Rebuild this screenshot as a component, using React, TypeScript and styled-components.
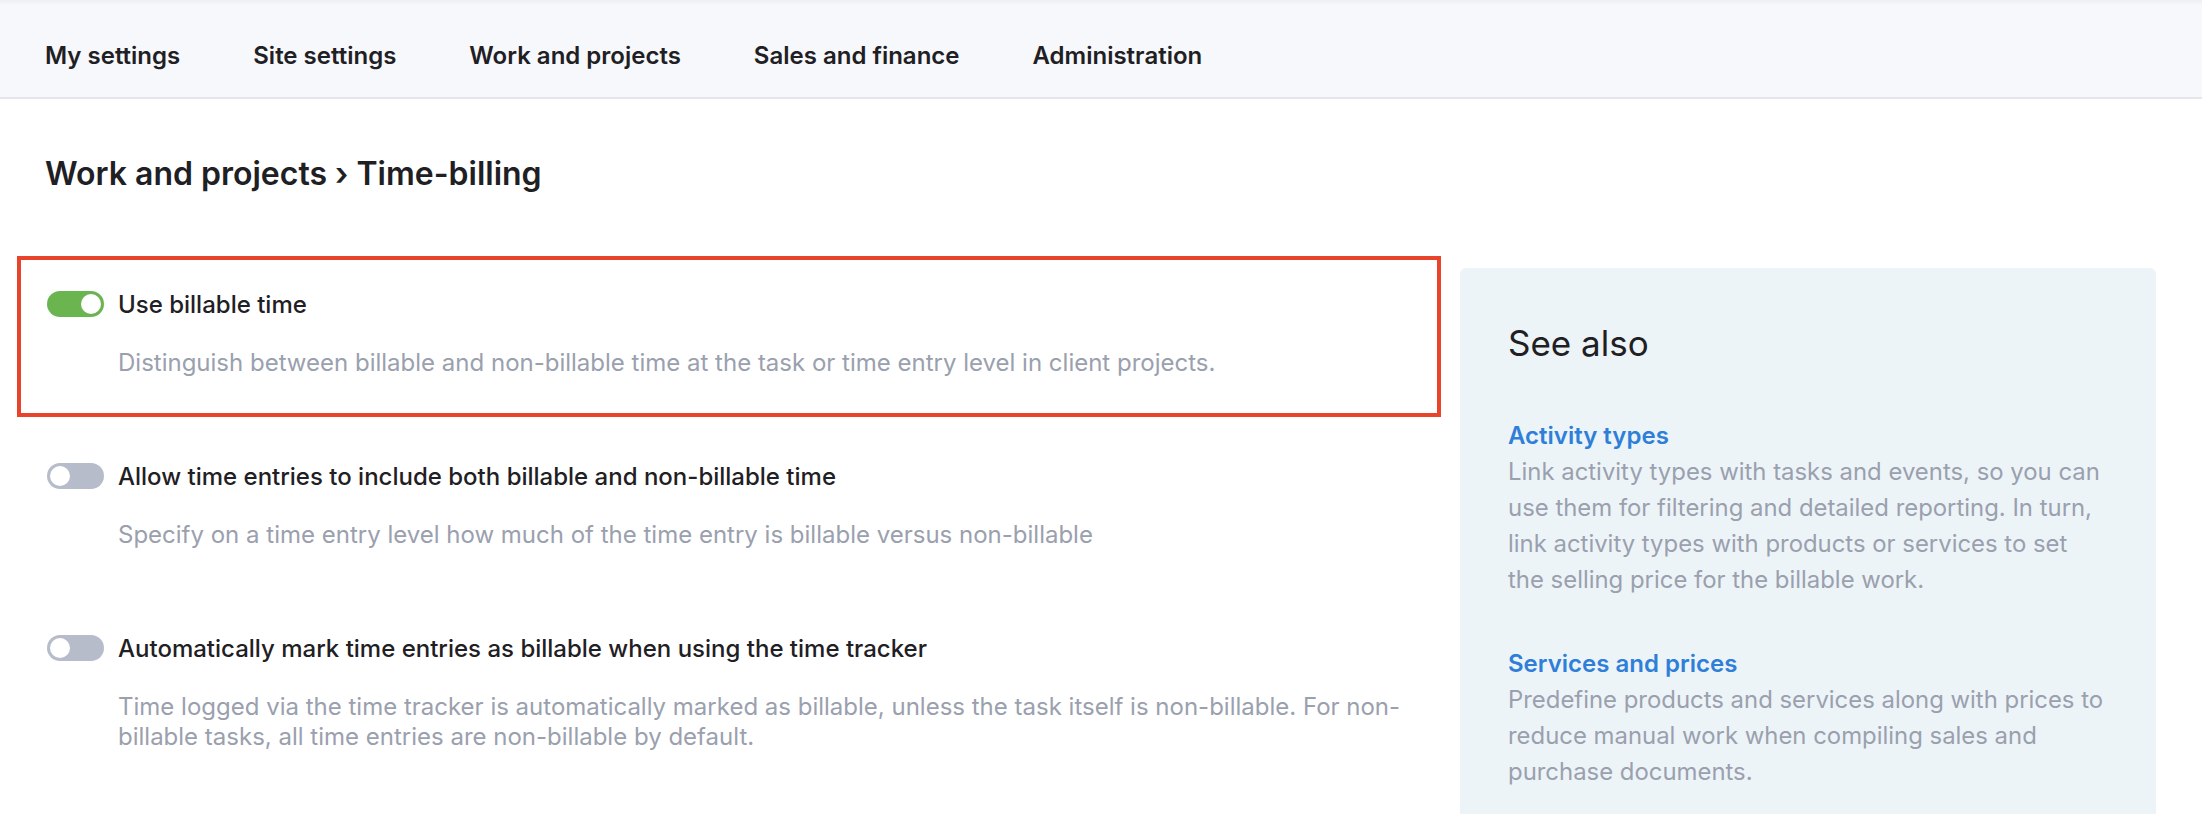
import React from "react";
import styled, { createGlobalStyle } from "styled-components";

const GlobalStyle = createGlobalStyle`
  body {
    margin: 0;
    background: #fff;
    font-family: Inter, "Noto Sans", sans-serif;
    color: #1f2024;
  }
`;

/**
 * Top navigation bar.
 */
const NavBar = styled.nav`
  display: flex;
  align-items: center;
  gap: 73px;
  height: 99px;
  box-sizing: border-box;
  padding: 14px 0 0 45px;
  background: #f7f8fb;
  border-bottom: 2px solid #e4e6ec;
  box-shadow: inset 0 5px 4px -3px rgba(0, 0, 0, 0.05);
`;

const NavItem = styled.a`
  font-size: 24px;
  font-weight: 600;
  color: #1f2024;
  text-decoration: none;
`;

const Heading = styled.h1`
  margin: 0;
  padding: 55px 45px 0;
  font-size: 32px;
  font-weight: 600;
  line-height: 40px;
`;

const Body = styled.div`
  display: flex;
  align-items: flex-start;
  gap: 19px;
  padding: 62px 46px 0 17px;
`;

const SettingsList = styled.div`
  display: flex;
  flex-direction: column;
  gap: 11px;
  width: 1424px;
`;

interface SettingProps {
  highlighted?: boolean;
}

/**
 * One setting: toggle, title and description.
 */
const Setting = styled.div<SettingProps>`
  padding: 29px 26px 35px;
  border: 4px solid ${(props) => (props.highlighted ? "#e8432b" : "transparent")};
`;

const SettingHead = styled.div`
  display: flex;
  align-items: center;
  gap: 14px;
  height: 30px;
`;

interface ToggleProps {
  on?: boolean;
}

const Toggle = styled.span<ToggleProps>`
  position: relative;
  flex: none;
  width: 57px;
  height: 26px;
  border-radius: 13px;
  background: ${(props) => (props.on ? "#6bb551" : "#b7bccb")};

  &::after {
    content: "";
    position: absolute;
    top: 3px;
    left: ${(props) => (props.on ? "34px" : "3px")};
    width: 20px;
    height: 20px;
    border-radius: 50%;
    background: #fff;
  }
`;

const SettingTitle = styled.span`
  font-size: 24px;
  font-weight: 500;
  color: #1f2024;
`;

const SettingText = styled.p`
  margin: 29px 0 0 71px;
  font-size: 24px;
  line-height: 30px;
  color: #9aa0ae;
`;

/**
 * "See also" side panel.
 */
const Panel = styled.aside`
  flex: 1;
  margin-top: 12px;
  min-height: 560px;
  padding: 48px 48px 0;
  background: #edf4f8;
  border-radius: 6px 6px 0 0;
`;

const PanelTitle = styled.h2`
  margin: 0 0 48px;
  font-size: 35px;
  font-weight: 400;
  line-height: 54px;
  color: #1f2024;
`;

const PanelEntry = styled.div`
  margin-bottom: 48px;
`;

const PanelLink = styled.a`
  display: block;
  font-size: 24px;
  font-weight: 600;
  line-height: 36px;
  color: #2f7fd9;
  text-decoration: none;
`;

const PanelText = styled.p`
  margin: 0;
  font-size: 23.9px;
  line-height: 36px;
  color: #9aa0ae;
`;

const navItems = [
  "My settings",
  "Site settings",
  "Work and projects",
  "Sales and finance",
  "Administration",
];

const settings = [
  {
    title: "Use billable time",
    text: "Distinguish between billable and non-billable time at the task or time entry level in client projects.",
    on: true,
    highlighted: true,
  },
  {
    title: "Allow time entries to include both billable and non-billable time",
    text: "Specify on a time entry level how much of the time entry is billable versus non-billable",
  },
  {
    title: "Automatically mark time entries as billable when using the time tracker",
    text: "Time logged via the time tracker is automatically marked as billable, unless the task itself is non-billable. For non-billable tasks, all time entries are non-billable by default.",
  },
];

const links = [
  {
    title: "Activity types",
    text: "Link activity types with tasks and events, so you can use them for filtering and detailed reporting. In turn, link activity types with products or services to set the selling price for the billable work.",
  },
  {
    title: "Services and prices",
    text: "Predefine products and services along with prices to reduce manual work when compiling sales and purchase documents.",
  },
];

const App: React.FC = () => (
  <>
    <GlobalStyle />
    <NavBar>
      {navItems.map((item) => (
        <NavItem key={item}>{item}</NavItem>
      ))}
    </NavBar>
    <Heading>Work and projects › Time-billing</Heading>
    <Body>
      <SettingsList>
        {settings.map((s) => (
          <Setting key={s.title} highlighted={s.highlighted}>
            <SettingHead>
              <Toggle on={s.on} />
              <SettingTitle>{s.title}</SettingTitle>
            </SettingHead>
            <SettingText>{s.text}</SettingText>
          </Setting>
        ))}
      </SettingsList>
      <Panel>
        <PanelTitle>See also</PanelTitle>
        {links.map((l) => (
          <PanelEntry key={l.title}>
            <PanelLink>{l.title}</PanelLink>
            <PanelText>{l.text}</PanelText>
          </PanelEntry>
        ))}
      </Panel>
    </Body>
  </>
);

export default App;
